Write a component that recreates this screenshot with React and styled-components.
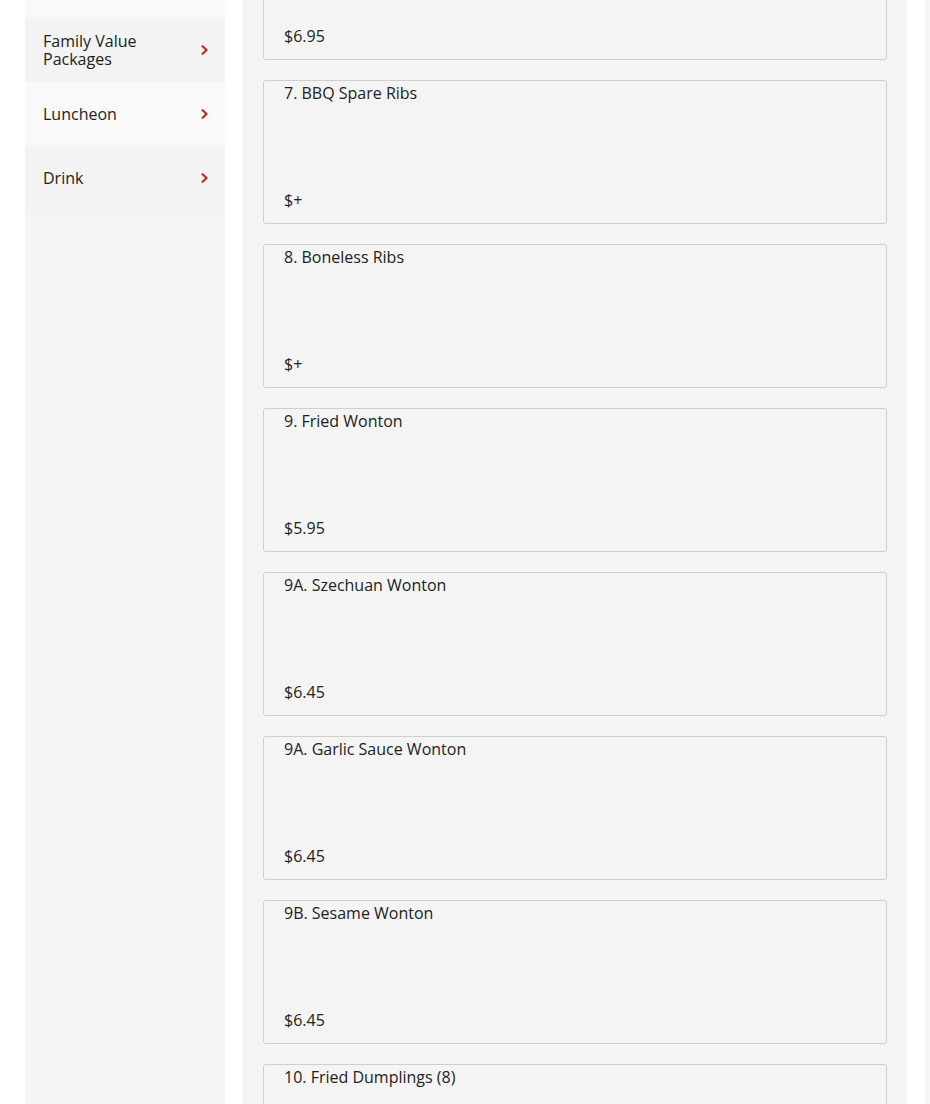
import React from "react"
import styled, { createGlobalStyle } from "styled-components"

const GlobalStyle = createGlobalStyle`
  html, body {
    margin: 0;
    padding: 0;
    background: #ffffff;
  }
  body {
    font-family: "Open Sans", "Liberation Sans", sans-serif;
    color: #222222;
  }
`

const categories = [
  { id: "soup", name: "Soup" },
  { id: "family", name: "Family Value Packages" },
  { id: "luncheon", name: "Luncheon" },
  { id: "drink", name: "Drink" },
]

const items = [
  { id: "6", name: "6. Egg Rolls", price: "$6.95" },
  { id: "7", name: "7. BBQ Spare Ribs", price: "$+" },
  { id: "8", name: "8. Boneless Ribs", price: "$+" },
  { id: "9", name: "9. Fried Wonton", price: "$5.95" },
  { id: "9a", name: "9A. Szechuan Wonton", price: "$6.45" },
  { id: "9a2", name: "9A. Garlic Sauce Wonton", price: "$6.45" },
  { id: "9b", name: "9B. Sesame Wonton", price: "$6.45" },
  { id: "10", name: "10. Fried Dumplings (8)", price: "$6.95" },
]

const Chevron = () => (
  <svg width="8" height="10" viewBox="0 0 8 10" aria-hidden="true">
    <path
      d="M1.6 1.2 L5.6 5 L1.6 8.8"
      fill="none"
      stroke="#a8322a"
      strokeWidth="2.2"
      strokeLinecap="round"
      strokeLinejoin="round"
    />
  </svg>
)

const App = () => (
  <>
    <GlobalStyle />
    <Page>
      <Sidebar>
        <CategoryList>
          {categories.map((cat, i) => (
            <Category key={cat.id} $alt={i % 2 === 0}>
              <CategoryName>{cat.name}</CategoryName>
              <Chevron />
            </Category>
          ))}
        </CategoryList>
      </Sidebar>
      <Menu>
        <ItemList>
          {items.map(item => (
            <ItemCard key={item.id}>
              <ItemName>{item.name}</ItemName>
              <ItemPrice>{item.price}</ItemPrice>
            </ItemCard>
          ))}
        </ItemList>
      </Menu>
      <Cart />
    </Page>
  </>
)

const Page = styled.div`
  display: flex;
  align-items: stretch;
  gap: 18px;
  height: 1104px;
  padding-left: 25px;
  overflow: hidden;
  box-sizing: border-box;
`

const Sidebar = styled.aside`
  flex: 0 0 200px;
  background: #f4f4f4;
  overflow: hidden;
`

const CategoryList = styled.ul`
  list-style: none;
  margin: -46px 0 0;
  padding: 0;
`

const Category = styled.li`
  display: flex;
  align-items: center;
  justify-content: space-between;
  height: 64px;
  padding: 0 16px 0 18px;
  box-sizing: border-box;
  background: ${p => (p.$alt ? "#f9f9f9" : "#f3f3f3")};
  font-size: 16px;
  line-height: 18px;
`

const CategoryName = styled.span`
  max-width: 125px;
`

const Menu = styled.main`
  flex: 0 0 664px;
  background: #f4f4f4;
  overflow: hidden;
`

const ItemList = styled.div`
  display: flex;
  flex-direction: column;
  gap: 20px;
  margin-top: -84px;
  padding: 0 20px;
`

const ItemCard = styled.div`
  display: flex;
  flex-direction: column;
  justify-content: space-between;
  height: 144px;
  padding: 2px 20px 13px;
  box-sizing: border-box;
  border: 1px solid #cfcfcf;
  border-radius: 3px;
  background: #f4f4f4;
  font-size: 16px;
  line-height: 20px;
`

const ItemName = styled.div``

const ItemPrice = styled.div``

const Cart = styled.aside`
  flex: 1;
  background: #f6f6f6;
`

export default App
